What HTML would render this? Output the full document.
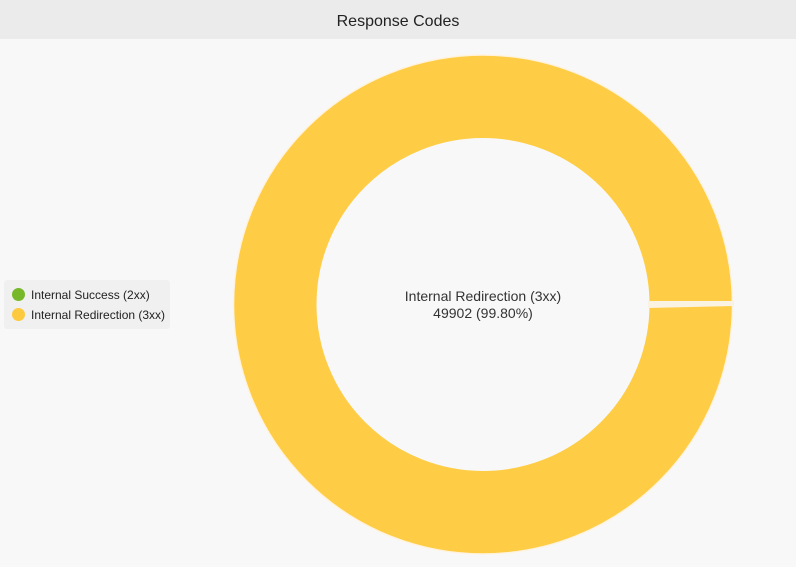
<!DOCTYPE html>
<html><head><style>
body{margin:0;width:796px;height:567px;background:#f8f8f8;font-family:"Liberation Sans",sans-serif;overflow:hidden;position:relative}
.t{position:absolute;left:0;top:0;width:796px;height:39px;background:#ebebeb;text-align:center;line-height:44px;font-size:16px;color:#222}
.lg{position:absolute;left:4px;top:280px;width:166px;height:49px;background:#f0f0f0;border-radius:3px}
.it{position:absolute;left:8px;font-size:12px;color:#222;height:14px;line-height:14px}
.d{display:inline-block;width:13px;height:13px;border-radius:50%;vertical-align:-2px;margin-right:6px}
.c{position:absolute;left:383px;width:200px;text-align:center;font-size:14px;color:#333}
</style></head><body>
<div class="t">Response Codes</div>
<div class="lg">
<div class="it" style="top:8px"><span class="d" style="background:#77b82a"></span>Internal Success (2xx)</div>
<div class="it" style="top:28px"><span class="d" style="background:#fdc93f"></span>Internal Redirection (3xx)</div>
</div>
<svg style="position:absolute;left:0;top:0" width="796" height="567">
<circle cx="483" cy="304.5" r="208" fill="none" stroke="#fecd45" stroke-width="83"/>
<circle cx="483" cy="304.5" r="249.5" fill="none" stroke="#fff3e0" stroke-width="1.5"/>
<polygon points="648,301 734,301 734,306 648,308" fill="#fbf3e2"/>
</svg>
<div class="c" style="top:288px">Internal Redirection (3xx)</div>
<div class="c" style="top:305px">49902 (99.80%)</div>
</body></html>
